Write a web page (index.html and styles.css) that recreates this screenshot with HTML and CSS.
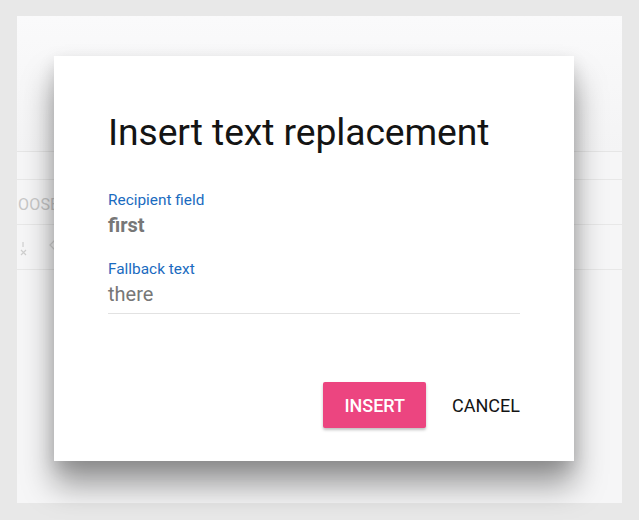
FILE: index.html
```html
<!DOCTYPE html>
<html lang="en">
<head>
<meta charset="utf-8">
<title>Insert text replacement</title>
<link rel="stylesheet" href="styles.css">
</head>
<body>
<div class="page">
  <div class="panel">
    <div class="panel-top"></div>
    <div class="panel-row row-thin"></div>
    <div class="panel-row row-label"><span class="ghost-text">OOSE</span></div>
    <div class="panel-row row-icons">
      <svg class="ghost-icon" width="10" height="14" viewBox="0 0 10 14"><path d="M2 8l5 5M7 8l-5 5M4 0v5" stroke="#cfcfcf" stroke-width="1.2" fill="none"/></svg>
      <svg class="ghost-icon chev" width="8" height="12" viewBox="0 0 8 12"><path d="M6 1L1 6l5 5" stroke="#d6d6d6" stroke-width="1.3" fill="none"/></svg>
    </div>
    <div class="panel-rest"></div>
  </div>

  <div class="modal">
    <h1 class="modal-title">Insert text replacement</h1>
    <div class="field">
      <div class="field-label">Recipient field</div>
      <div class="field-value strong">first</div>
    </div>
    <div class="field input">
      <div class="field-label">Fallback text</div>
      <div class="field-value">there</div>
    </div>
    <div class="actions">
      <button class="btn btn-raised">INSERT</button>
      <button class="btn btn-flat">CANCEL</button>
    </div>
  </div>
</div>
</body>
</html>
```

FILE: styles.css
```css
* { box-sizing: border-box; }

html, body {
  margin: 0;
  padding: 0;
}

body {
  background: #e8e8e8;
  font-family: Roboto, "Liberation Sans", Arial, sans-serif;
  width: 639px;
  height: 520px;
  overflow: hidden;
}

.page {
  position: relative;
  width: 639px;
  height: 520px;
  padding: 16px 17px 17px 17px;
}

.panel {
  width: 605px;
  height: 487px;
  background: #f6f6f7;
  overflow: hidden;
  display: flex;
  flex-direction: column;
}

.panel-top {
  height: 136px;
  background: linear-gradient(#fafafb, #f4f4f5);
  border-bottom: 1px solid #e6e6e6;
  flex: none;
}

.panel-row {
  flex: none;
  border-bottom: 1px solid #e8e8e8;
  display: flex;
  align-items: center;
}

.row-thin { height: 28px; }
.row-label { height: 45px; padding-top: 4px; }
.row-icons { height: 45px; gap: 20px; padding-left: 2px; padding-top: 4px; }

.panel-rest { flex: 1; }

.ghost-text {
  margin-left: 1px;
  font-size: 16px;
  color: #c8c8c8;
  letter-spacing: 0.2px;
}

.ghost-icon { display: block; }
.ghost-icon.chev { margin-top: -8px; }

.modal {
  position: absolute;
  left: 54px;
  top: 56px;
  width: 520px;
  height: 405px;
  background: #fff;
  padding: 54px 54px 0 54px;
  box-shadow: 0 24px 30px rgba(0, 0, 0, 0.38), 0 6px 16px rgba(0, 0, 0, 0.12);
  display: flex;
  flex-direction: column;
}

.modal-title {
  margin: 0 0 37px 0;
  font-size: 37.3px;
  font-weight: 400;
  line-height: 44px;
  color: #141414;
  letter-spacing: -0.1px;
}

.field {
  display: flex;
  flex-direction: column;
  margin-bottom: 22px;
}

.field-label {
  font-size: 15.4px;
  line-height: 18px;
  color: #1a6bc0;
}

.field-value {
  margin-top: 3px;
  font-size: 20px;
  line-height: 26px;
  color: #777;
}

.field-value.strong {
  font-weight: 700;
}

.field.input {
  border-bottom: 1px solid #e2e2e2;
  padding-bottom: 6px;
  margin-bottom: 0;
}

.actions {
  margin-top: 68px;
  display: flex;
  justify-content: flex-end;
  align-items: center;
  gap: 26px;
}

.btn {
  font-family: Roboto, "Liberation Sans", Arial, sans-serif;
  font-size: 18px;
  border: none;
  background: none;
  cursor: pointer;
  padding: 0;
}

.btn-raised {
  height: 46px;
  padding: 0 21px;
  background: #ec4580;
  color: #fff;
  font-weight: 500;
  border-radius: 2px;
  box-shadow: 0 2px 3px rgba(0, 0, 0, 0.25);
}

.btn-flat {
  color: #141414;
  font-weight: 400;
}
```
